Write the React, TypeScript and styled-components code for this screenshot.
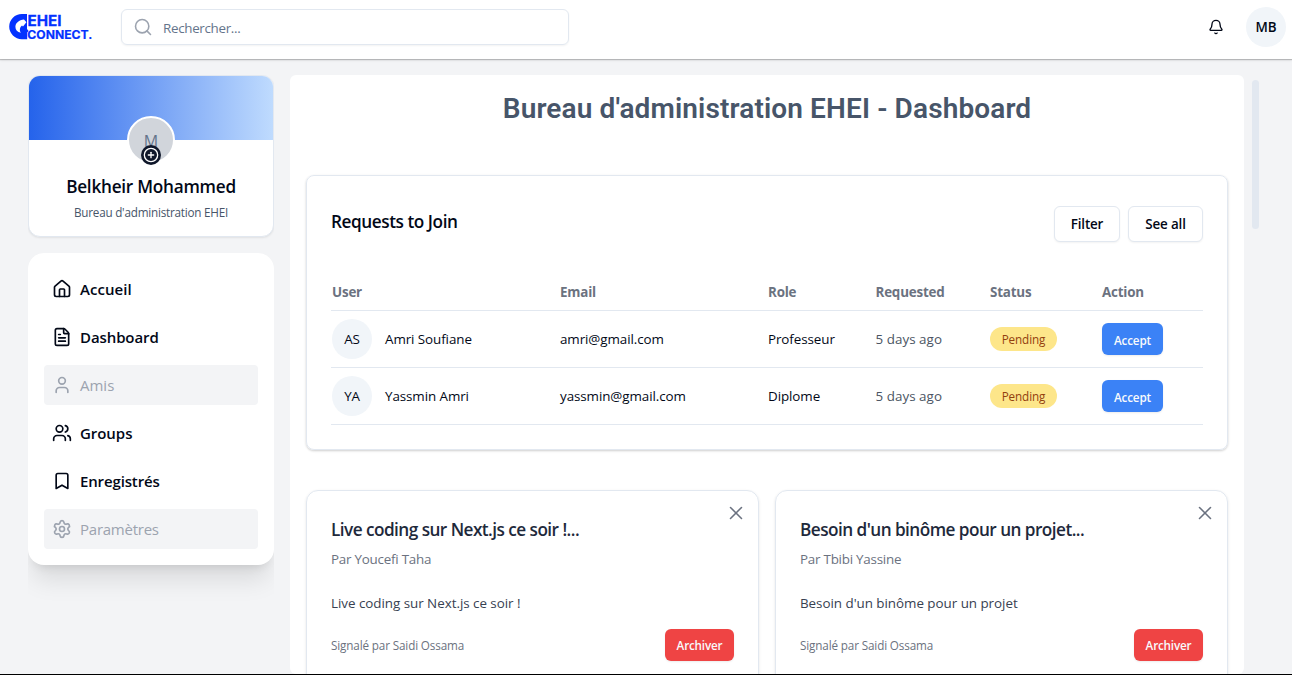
import React from "react";
import styled, { createGlobalStyle } from "styled-components";
import {
  Bell,
  Bookmark,
  CirclePlus,
  FileText,
  House,
  Search,
  Settings,
  User,
  Users,
  X,
} from "lucide-react";

const GlobalStyle = createGlobalStyle`
  *, *::before, *::after { box-sizing: border-box; }
  html, body { margin: 0; height: 100%; overflow: hidden; }
  body {
    background: #f3f4f6;
    color: #020817;
    font-family: "Segoe UI", "Open Sans", "Noto Sans", sans-serif;
    font-size: 13.4px;
    line-height: 20px;
  }
  button { font-family: inherit; }
  h1, h2, h3, p { margin: 0; }
`;

const Page = styled.div`
  height: 675px;
  display: flex;
  flex-direction: column;
  border-bottom: 1px solid #000;
  overflow: hidden;
`;

const Header = styled.header`
  flex: none;
  height: 59px;
  padding: 0 6px 5px 8px;
  display: flex;
  align-items: center;
  background: #fff;
  box-shadow: 0 1px 1px rgba(0, 0, 0, 0.2), 0 1px 3px rgba(0, 0, 0, 0.1);
`;

const Logo = styled.svg`
  width: 86px;
  height: 28px;
  display: block;
  overflow: visible;
`;

const SearchBox = styled.label`
  display: flex;
  align-items: center;
  gap: 10px;
  width: 448px;
  height: 36px;
  margin-left: 27px;
  padding: 0 12px 0 11px;
  border: 1px solid #e2e8f0;
  border-radius: 6px;
  box-shadow: 0 1px 2px rgba(0, 0, 0, 0.05);
  color: #9ca3af;
`;

const SearchText = styled.span`
  color: #64748b;
  letter-spacing: -0.32px;
  padding-top: 1px;
`;

const HeaderActions = styled.div`
  margin-left: auto;
  display: flex;
  align-items: center;
  gap: 22px;
`;

const Initials = styled.div<{ $strong?: boolean }>`
  flex: none;
  width: 40px;
  height: 40px;
  border-radius: 50%;
  display: flex;
  align-items: center;
  justify-content: center;
  background: #f1f5f9;
  font-weight: ${(p) => (p.$strong ? 600 : 400)};
  letter-spacing: -0.2px;
`;

const Body = styled.div`
  flex: 1;
  min-height: 0;
  display: flex;
  padding: 16px 33px 0 28px;
`;

const Sidebar = styled.aside`
  flex: none;
  width: 246px;
  overflow: hidden;
`;

const ProfileCard = styled.section`
  height: 162px;
  border: 1px solid #e2e8f0;
  border-radius: 12px;
  background: #fff;
  box-shadow: 0 1px 2px rgba(0, 0, 0, 0.08);
  overflow: hidden;
  display: flex;
  flex-direction: column;
  align-items: center;
`;

const Banner = styled.div`
  align-self: stretch;
  height: 64px;
  background: linear-gradient(to right, #2563eb, #bfdbfe);
`;

const Avatar = styled.div`
  position: relative;
  width: 48px;
  height: 48px;
  margin-top: -24px;
  border: 2px solid #fff;
  border-radius: 50%;
  background: #d1d5db;
  color: #64748b;
  font-size: 16px;
  line-height: 46px;
  text-align: center;
`;

const AddBadge = styled.span`
  position: absolute;
  left: 12px;
  top: 27px;
  width: 20px;
  height: 20px;
  border-radius: 50%;
  background: #0f172a;
  color: #fff;
  display: flex;
  align-items: center;
  justify-content: center;
`;

const ProfileName = styled.h2`
  margin-top: 9px;
  font-size: 17.2px;
  line-height: 28px;
  font-weight: 600;
  letter-spacing: -0.25px;
`;

const ProfileRole = styled.p`
  margin-top: 1px;
  font-size: 11.7px;
  color: #475569;
  letter-spacing: -0.22px;
`;

const Nav = styled.nav`
  margin-top: 16px;
  padding: 16px;
  border-radius: 16px;
  background: #fff;
  display: flex;
  flex-direction: column;
  gap: 8px;
  box-shadow: 0 20px 25px -5px rgba(0, 0, 0, 0.1),
    0 8px 10px -6px rgba(0, 0, 0, 0.1);
`;

const NavItem = styled.a<{ $disabled?: boolean; $spacing: number }>`
  height: 40px;
  padding: 0 8px;
  border-radius: 4px;
  display: flex;
  align-items: center;
  gap: 8px;
  font-size: 15px;
  font-weight: ${(p) => (p.$disabled ? 400 : 600)};
  letter-spacing: ${(p) => p.$spacing}px;
  color: ${(p) => (p.$disabled ? "#9ca3af" : "#020817")};
  background: ${(p) => (p.$disabled ? "#f3f4f6" : "transparent")};
  & > svg { flex: none; }
`;

const Main = styled.main`
  flex: none;
  width: 954px;
  height: 599px;
  margin-left: 16px;
  padding: 16px;
  border-radius: 6px;
  background: #fff;
  overflow: hidden;
`;

const ScrollThumb = styled.div`
  flex: none;
  width: 7px;
  height: 149px;
  margin: 5px 0 0 8px;
  border-radius: 4px;
  background: #e2e8f0;
`;

const Title = styled.h1`
  height: 84px;
  font-family: Roboto, sans-serif;
  font-size: 28px;
  line-height: 36px;
  font-weight: 600;
  letter-spacing: 0.12px;
  text-align: center;
  color: #475569;
`;

const Panel = styled.section`
  height: 275px;
  padding: 30px 24px 24px;
  border: 1px solid #e2e8f0;
  border-radius: 8px;
  box-shadow: 0 1px 3px rgba(0, 0, 0, 0.1), 0 1px 2px rgba(0, 0, 0, 0.1);
`;

const PanelHead = styled.div`
  display: flex;
  justify-content: space-between;
  height: 68px;
`;

const PanelTitle = styled.h2`
  font-size: 17.2px;
  line-height: 31px;
  font-weight: 600;
  letter-spacing: -0.44px;
`;

const ButtonRow = styled.div`
  display: flex;
  gap: 8px;
`;

const OutlineButton = styled.button<{ $width: number }>`
  width: ${(p) => p.$width}px;
  height: 36px;
  padding: 0 0 1px;
  border: 1px solid #e2e8f0;
  border-radius: 6px;
  background: #fff;
  box-shadow: 0 1px 2px rgba(0, 0, 0, 0.05);
  color: #020817;
  font-size: 13.4px;
  font-weight: 600;
  letter-spacing: -0.15px;
`;

const Row = styled.div<{ $head?: boolean }>`
  display: grid;
  grid-template-columns: 229px 208px 107.5px 114.5px 112px 1fr;
  align-items: center;
  height: ${(p) => (p.$head ? 37 : 57)}px;
  border-bottom: 1px solid #e2e8f0;
  ${(p) => p.$head && "color: #6b7280; font-weight: 700;"}
`;

const Cell = styled.div<{ $muted?: boolean }>`
  display: flex;
  align-items: center;
  gap: 13px;
  white-space: nowrap;
  color: ${(p) => (p.$muted ? "#4b5563" : "inherit")};
  letter-spacing: ${(p) => (p.$muted ? 0.04 : -0.08)}px;
  &:first-child { padding-left: 1px; }
`;

const HeadCell = styled(Cell)`
  letter-spacing: -0.2px;
`;

const Pill = styled.span`
  width: 67px;
  height: 24px;
  border-radius: 12px;
  background: #fde68a;
  color: #92400e;
  font-size: 11.7px;
  line-height: 25px;
  text-align: center;
  letter-spacing: -0.1px;
`;

const ActionButton = styled.button<{ $tone: "blue" | "red"; $width: number }>`
  width: ${(p) => p.$width}px;
  height: 32px;
  padding: ${(p) => (p.$tone === "blue" ? "1px 0 0" : "0")};
  border: 0;
  border-radius: 6px;
  background: ${(p) => (p.$tone === "blue" ? "#3b82f6" : "#ef4444")};
  box-shadow: 0 1px 2px rgba(0, 0, 0, 0.08);
  color: #f8fafc;
  font-size: 11.7px;
  font-weight: 600;
  letter-spacing: -0.18px;
`;

const Reports = styled.div`
  display: grid;
  grid-template-columns: 1fr 1fr;
  gap: 16px;
  margin-top: 40px;
`;

const ReportCard = styled.article`
  position: relative;
  height: 220px;
  padding: 24px;
  border: 1px solid #e2e8f0;
  border-radius: 12px;
  box-shadow: 0 1px 3px rgba(0, 0, 0, 0.1);
`;

const CloseIcon = styled(X)`
  position: absolute;
  right: 11px;
  top: 11px;
  color: #6b7280;
`;

const ReportTitle = styled.h3`
  font-size: 17.2px;
  line-height: 30px;
  font-weight: 600;
  letter-spacing: -0.54px;
  color: #1e293b;
`;

const Author = styled.p`
  margin-top: 4px;
  color: #6b7280;
  letter-spacing: -0.24px;
`;

const Excerpt = styled.p`
  margin-top: 24px;
  color: #374151;
  letter-spacing: -0.03px;
`;

const ReportFoot = styled.div`
  margin-top: 16px;
  display: flex;
  align-items: center;
  justify-content: space-between;
  color: #6b7280;
  font-size: 11.7px;
  letter-spacing: -0.14px;
`;

const navItems = [
  { label: "Accueil", Icon: House, spacing: 0.05 },
  { label: "Dashboard", Icon: FileText, spacing: -0.1 },
  { label: "Amis", Icon: User, spacing: 0, disabled: true },
  { label: "Groups", Icon: Users, spacing: -0.05 },
  { label: "Enregistrés", Icon: Bookmark, spacing: -0.14 },
  { label: "Paramètres", Icon: Settings, spacing: -0.24, disabled: true },
];

const requests = [
  { initials: "AS", name: "Amri Soufiane", email: "amri@gmail.com", role: "Professeur" },
  { initials: "YA", name: "Yassmin Amri", email: "yassmin@gmail.com", role: "Diplome" },
];

const reports = [
  { text: "Live coding sur Next.js ce soir !", author: "Youcefi Taha" },
  { text: "Besoin d'un binôme pour un projet", author: "Tbibi Yassine" },
];

const columns = ["User", "Email", "Role", "Requested", "Status", "Action"];

function BrandLogo() {
  return (
    <Logo viewBox="0 0 86 28" fill="#0432ff">
      <path d="M19 1H13.8A12.6 12.6 0 0 0 13.8 26.2H19.2V19.5L20.6 18L19 16Z" />
      <path
        d="M16 6.4C11 7 7.4 9.8 7.4 13.7C7.4 16.8 9.4 19.2 12.8 19.8C11.2 17.2 11.6 14.2 14 12.4L15 13.4L18.4 9.2Z"
        fill="#fff"
      />
      <text x="19.5" y="13.2" fontFamily="Inter, sans-serif" fontWeight="700" fontSize="15" stroke="#0432ff" strokeWidth="0.3" textLength="34" lengthAdjust="spacingAndGlyphs">EHEI</text>
      <text x="19.3" y="25.8" fontFamily="Inter, sans-serif" fontWeight="700" fontSize="12" stroke="#0432ff" strokeWidth="0.2" textLength="65" lengthAdjust="spacingAndGlyphs">CONNECT.</text>
    </Logo>
  );
}

export default function App() {
  return (
    <>
      <GlobalStyle />
      <Page>
        <Header>
          <BrandLogo />
          <SearchBox>
            <Search size={20} strokeWidth={1.9} />
            <SearchText>Rechercher...</SearchText>
          </SearchBox>
          <HeaderActions>
            <Bell size={16} strokeWidth={2} />
            <Initials $strong>MB</Initials>
          </HeaderActions>
        </Header>
        <Body>
          <Sidebar>
            <ProfileCard>
              <Banner />
              <Avatar>
                M
                <AddBadge>
                  <CirclePlus size={16} strokeWidth={2} />
                </AddBadge>
              </Avatar>
              <ProfileName>Belkheir Mohammed</ProfileName>
              <ProfileRole>Bureau d'administration EHEI</ProfileRole>
            </ProfileCard>
            <Nav>
              {navItems.map(({ label, Icon, spacing, disabled }) => (
                <NavItem key={label} $disabled={disabled} $spacing={spacing}>
                  <Icon size={20} />
                  {label}
                </NavItem>
              ))}
            </Nav>
          </Sidebar>
          <Main>
            <Title>Bureau d'administration EHEI - Dashboard</Title>
            <Panel>
              <PanelHead>
                <PanelTitle>Requests to Join</PanelTitle>
                <ButtonRow>
                  <OutlineButton $width={66}>Filter</OutlineButton>
                  <OutlineButton $width={75}>See all</OutlineButton>
                </ButtonRow>
              </PanelHead>
              <Row $head>
                {columns.map((c) => (
                  <HeadCell key={c}>{c}</HeadCell>
                ))}
              </Row>
              {requests.map((r) => (
                <Row key={r.email}>
                  <Cell>
                    <Initials>{r.initials}</Initials>
                    {r.name}
                  </Cell>
                  <Cell>{r.email}</Cell>
                  <Cell>{r.role}</Cell>
                  <Cell $muted>5 days ago</Cell>
                  <Cell>
                    <Pill>Pending</Pill>
                  </Cell>
                  <Cell>
                    <ActionButton $tone="blue" $width={61}>Accept</ActionButton>
                  </Cell>
                </Row>
              ))}
            </Panel>
            <Reports>
              {reports.map((r) => (
                <ReportCard key={r.author}>
                  <CloseIcon size={22} strokeWidth={1.7} />
                  <ReportTitle>{r.text}...</ReportTitle>
                  <Author>Par {r.author}</Author>
                  <Excerpt>{r.text}</Excerpt>
                  <ReportFoot>
                    <span>Signalé par Saidi Ossama</span>
                    <ActionButton $tone="red" $width={69}>Archiver</ActionButton>
                  </ReportFoot>
                </ReportCard>
              ))}
            </Reports>
          </Main>
          <ScrollThumb />
        </Body>
      </Page>
    </>
  );
}
